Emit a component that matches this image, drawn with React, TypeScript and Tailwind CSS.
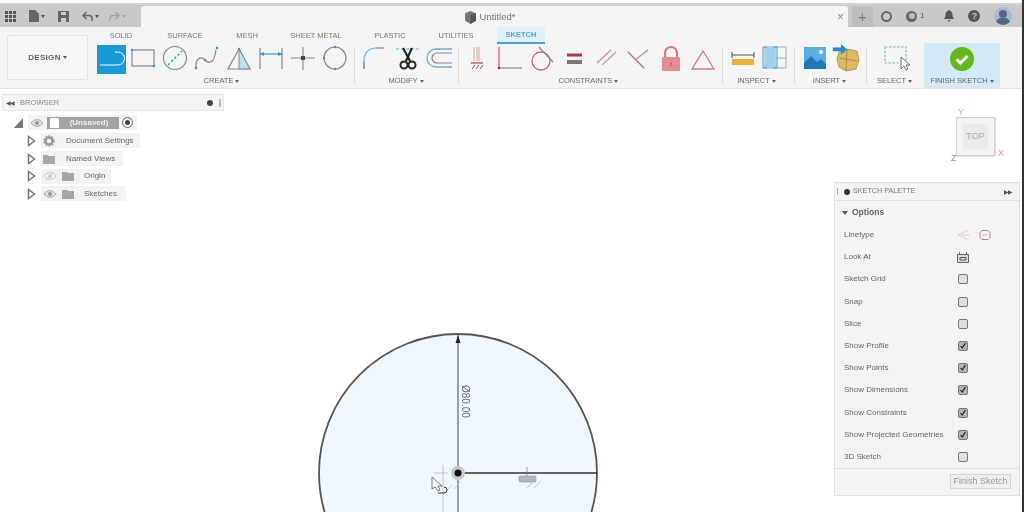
import type { ReactNode } from 'react'

const tabs = [
  { name: 'SOLID', w: 'w-[48px]' },
  { name: 'SURFACE', w: 'w-[80px]' },
  { name: 'MESH', w: 'w-[44px]' },
  { name: 'SHEET METAL', w: 'w-[94px]' },
  { name: 'PLASTIC', w: 'w-[54px]' },
  { name: 'UTILITIES', w: 'w-[78px]' },
]

const paletteRows = [
  { label: 'Sketch Grid', checked: false },
  { label: 'Snap', checked: false },
  { label: 'Slice', checked: false },
  { label: 'Show Profile', checked: true },
  { label: 'Show Points', checked: true },
  { label: 'Show Dimensions', checked: true },
  { label: 'Show Constraints', checked: true },
  { label: 'Show Projected Geometries', checked: true },
  { label: '3D Sketch', checked: false },
]

function Tool({ children }: { children: ReactNode }) {
  return (
    <svg viewBox="0 0 32 30" className="h-[30px] w-[32px] flex-shrink-0" fill="none">
      {children}
    </svg>
  )
}

function Caret({ color = 'border-t-[#666]' }: { color?: string }) {
  return <span className={`ml-[2px] inline-block h-0 w-0 border-x-[2.5px] border-t-[3px] border-x-transparent align-middle ${color}`} />
}

function Group({ label, w, labelPad = '', children }: { label: string; w: string; labelPad?: string; children: ReactNode }) {
  return (
    <div className={`flex flex-shrink-0 flex-col items-center ${w}`}>
      <div className="flex h-[30px] items-center justify-center">{children}</div>
      <div className={`mt-[1px] flex h-[12px] items-center whitespace-nowrap text-[7.500px] text-[#6a6a6a] ${labelPad}`}>
        {label}
        <Caret />
      </div>
    </div>
  )
}

function Sep() {
  return <div className="mt-[3px] h-[37px] w-px flex-shrink-0 bg-[#dddddd]" />
}

function Eye({ faded = false }: { faded?: boolean }) {
  return (
    <svg viewBox="0 0 14 10" className="h-[10px] w-[14px] flex-shrink-0" fill="none">
      <path d="M1 5c3-4.5 9-4.500 12 0-3 4.500-9 4.500-12 0z" stroke={faded ? '#c8c8c8' : '#aaa'} fill={faded ? '#f4f4f4' : '#ddd'} />
      <circle cx="7" cy="5" r="2" fill={faded ? '#d0d0d0' : '#999'} />
      {faded && <path d="M3 9l8-8" stroke="#c8c8c8" />}
    </svg>
  )
}

function Folder() {
  return (
    <svg viewBox="0 0 12 10" className="h-[10px] w-[12px] flex-shrink-0">
      <path d="M0 1h5l1 1h6v8H0z" fill="#a6a6a6" />
    </svg>
  )
}

function Expand() {
  return (
    <svg viewBox="0 0 9 12" className="h-[12px] w-[9px] flex-shrink-0" fill="none">
      <path d="M1.500 1.500v9L7.500 6z" stroke="#777" strokeWidth="1.500" fill="#fff" />
    </svg>
  )
}

function TreeRow({ w, icons, label, labelW }: { w: string; icons: ReactNode; label: string; labelW: string }) {
  return (
    <div className="flex h-[17.700px] items-center pl-[25px]">
      <Expand />
      <div className={`ml-[5px] flex h-[15px] items-center bg-[#f3f3f3] ${w}`}>
        {icons}
        <span className={`whitespace-nowrap text-[8px] text-[#666] ${labelW}`}>{label}</span>
      </div>
    </div>
  )
}

function PaletteCheck({ checked }: { checked: boolean }) {
  return (
    <div className={`flex h-[10px] w-[10px] items-center justify-center rounded-[2px] border border-[#777] ${checked ? 'bg-[#b4b4b4]' : 'bg-[#dedede]'}`}>
      {checked && (
        <svg viewBox="0 0 10 10" className="h-[10px] w-[10px]" fill="none">
          <path d="M2 5l2 2.500L8 1.500" stroke="#222" strokeWidth="1.500" />
        </svg>
      )}
    </div>
  )
}

function Browser() {
  return (
    <div className="absolute left-[2px] top-[5px] w-[222px]">
      <div className="flex h-[17px] items-center border border-[#e6e6e6] bg-[#f4f4f4] pl-[3px] pr-[2px]">
        <span className="text-[6px] leading-none tracking-[-1px] text-[#555]">◀◀</span>
        <span className="ml-[6px] flex-1 text-[7.600px] text-[#8a8a8a]">BROWSER</span>
        <span className="h-[6px] w-[6px] rounded-full bg-[#444]" />
        <span className="ml-[6px] h-[8px] w-[2px] border-x border-[#bbb]" />
      </div>
      <div className="mb-[1px] mt-[3px] flex h-[17px] items-center pl-[12px]">
        <svg viewBox="0 0 10 10" className="h-[10px] w-[10px] flex-shrink-0">
          <path d="M9 0v10H0z" fill="#777" />
        </svg>
        <div className="ml-[4px] flex h-[15px] w-[109px] items-center bg-[#f3f3f3] pl-[2px]">
          <Eye />
          <div className="ml-[3px] flex h-[12px] w-[72px] flex-shrink-0 items-center bg-[#a3a3a3]">
            <div className="ml-[3px] h-[10px] w-[9px] rounded-[1px] bg-[#fff]" />
            <span className="flex-1 text-center text-[8px] font-bold text-[#eee]">(Unsaved)</span>
          </div>
          <div className="ml-[3px] flex h-[11px] w-[11px] flex-shrink-0 items-center justify-center rounded-full border border-[#666]">
            <div className="h-[5px] w-[5px] rounded-full bg-[#444]" />
          </div>
        </div>
      </div>
      <TreeRow
        w="w-[99px]"
        icons={
          <svg viewBox="0 0 12 12" className="ml-[2px] h-[12px] w-[12px] flex-shrink-0" fill="none">
            <circle cx="6" cy="6" r="3.500" stroke="#999" strokeWidth="2.500" />
            <circle cx="6" cy="6" r="5" stroke="#999" strokeWidth="1.500" strokeDasharray="1.600 1.600" />
          </svg>
        }
        label="Document Settings"
        labelW="ml-[11px]"
      />
      <TreeRow
        w="w-[82px]"
        icons={<span className="ml-[2px]"><Folder /></span>}
        label="Named Views"
        labelW="ml-[11px]"
      />
      <TreeRow
        w="w-[70px]"
        icons={
          <span className="ml-[2px] flex items-center gap-[5px]">
            <Eye faded />
            <Folder />
          </span>
        }
        label="Origin"
        labelW="ml-[10px]"
      />
      <TreeRow
        w="w-[85px]"
        icons={
          <span className="ml-[2px] flex items-center gap-[5px]">
            <Eye />
            <Folder />
          </span>
        }
        label="Sketches"
        labelW="ml-[10px]"
      />
    </div>
  )
}

function ViewCube() {
  return (
    <div className="absolute left-[946px] top-[16px] h-[62px] w-[60px]">
      <div className="absolute left-[10px] top-[12px] flex h-[39px] w-[39px] items-center justify-center border border-[#d0d0d0] bg-[#f4f4f4] shadow-[1px_1px_1px_#e0e0e0]">
        <div className="flex h-[25px] w-[25px] items-center justify-center bg-[#ebebeb] text-[9px] text-[#a5a5a5]">TOP</div>
      </div>
      <span className="absolute left-[12px] top-[3px] text-[9px] leading-none text-[#8fd9a0]">Y</span>
      <span className="absolute left-[52px] top-[44px] text-[9px] leading-none text-[#ef8f8f]">X</span>
      <span className="absolute left-[5px] top-[49px] text-[9px] leading-none text-[#8f8fe6]">Z</span>
    </div>
  )
}

function Palette() {
  return (
    <div className="absolute left-[834px] top-[93px] flex h-[314px] w-[186px] flex-col border border-[#e2e2e2] bg-[#f4f4f4]">
      <div className="flex h-[18px] flex-shrink-0 items-center border-b border-[#e2e2e2] pl-[2px] pr-[7px]">
        <span className="h-[7px] w-[2px] border-l border-[#aaa]" />
        <span className="ml-[5px] h-[6px] w-[6px] rounded-full bg-[#333]" />
        <span className="ml-[3px] flex-1 text-[7.200px] text-[#777]">SKETCH PALETTE</span>
        <span className="text-[6px] leading-none tracking-[-1px] text-[#555]">▶▶</span>
      </div>
      <div className="flex h-[23px] flex-shrink-0 items-center pl-[7px] text-[8.500px] font-bold text-[#666]">
        <span className="mr-[4px] h-0 w-0 border-x-[3px] border-t-[4px] border-x-transparent border-t-[#555]" />
        Options
      </div>
      <div className="flex h-[22.200px] flex-shrink-0 items-center pl-[9px] text-[8px] text-[#666]">
        <span className="w-[112px]">Linetype</span>
        <svg viewBox="0 0 14 12" className="h-[12px] w-[13px]" fill="none">
          <path d="M13 1L2 6l11 5M6 6h8" stroke="#e0b48f" strokeDasharray="2 1" />
        </svg>
        <svg viewBox="0 0 12 12" className="ml-[10px] h-[12px] w-[12px]" fill="none">
          <path d="M3 1.500h6l2 2v5l-2 2H3l-2-2v-5z" stroke="#a88" />
          <path d="M3 6h6" stroke="#dba" />
        </svg>
      </div>
      <div className="flex h-[22.200px] flex-shrink-0 items-center pl-[9px] text-[8px] text-[#666]">
        <span className="w-[113px]">Look At</span>
        <svg viewBox="0 0 12 12" className="h-[12px] w-[12px]" fill="none">
          <path d="M.5 3.500h11v8H.5z" fill="#ddd" stroke="#666" />
          <path d="M2.500 1v3M9.500 1v3" stroke="#666" />
          <path d="M3 6.500h6v2.500H3z" stroke="#555" />
        </svg>
      </div>
      {paletteRows.map((r) => (
        <div key={r.label} className="flex h-[22.200px] flex-shrink-0 items-center pl-[9px] text-[8px] text-[#666]">
          <span className="w-[114px] whitespace-nowrap">{r.label}</span>
          <PaletteCheck checked={r.checked} />
        </div>
      ))}
      <div className="flex flex-1 items-center justify-end border-t border-[#e2e2e2] pb-[1px] pr-[8px]">
        <div className="flex h-[15px] w-[61px] items-center justify-center border border-[#d5d5d5] bg-[#efefef] text-[9px] text-[#999]">
          Finish Sketch
        </div>
      </div>
    </div>
  )
}

function SketchDrawing() {
  return (
    <svg viewBox="0 0 300 187" className="absolute left-[310px] top-[236px] h-[187px] w-[300px]" fill="none">
      <circle cx="148" cy="148" r="139" fill="#f0f7fd" stroke="#555" strokeWidth="1.800" />
      <path d="M148 10v177" stroke="#444" strokeWidth="1" />
      <path d="M148 10l-2.500 8h5z" fill="#222" />
      <path d="M148 148h139" stroke="#333" strokeWidth="1.300" />
      <text x="0" y="0" transform="translate(152 60) rotate(90)" fontSize="10" fill="#666" fontFamily="'Liberation Sans', sans-serif">
        Ø80.00
      </text>
      <path d="M133 140v47M124 148h14" stroke="#bbb" strokeWidth="0.800" />
      <circle cx="148" cy="148" r="7" fill="#c8c8c8" />
      <circle cx="148" cy="148" r="3.500" fill="#111" />
      <path d="M142 160l-5 5M150 157l-6 7" stroke="#b5d3e5" />
      <path d="M122 152v12l3-2 3 4 2-1-2-4h4z" fill="#fff" stroke="#555" strokeWidth="0.800" />
      <path d="M134 162a3 3 0 0 1 0 6h-6" stroke="#333" />
      <path d="M217 142v11" stroke="#777" strokeWidth="0.700" />
      <rect x="209" y="151" width="17" height="6" rx="1" fill="#b5b5b5" stroke="#999" strokeWidth="0.600" />
      <path d="M217 163l7-7M224 163l7-7" stroke="#a5cde0" />
    </svg>
  )
}

export default function App() {
  return (
    <div className="flex h-[512px] w-[1024px] flex-col overflow-hidden border-r-2 border-[#333] bg-white pt-[3px] blur-[0.5px]" style={{ fontFamily: "'Liberation Sans', Arial, sans-serif" }}>
      {/* title bar */}
      <div className="flex h-[24px] flex-shrink-0 items-end border-t-2 border-[#d4d4d4] bg-[#c9c9c9]">
        <div className="flex h-full w-[141px] flex-shrink-0 items-center pl-[5px]">
          <svg viewBox="0 0 11 11" className="h-[11px] w-[11px]" fill="#555">
            {[0, 4, 8].map((y) => [0, 4, 8].map((x) => <rect key={`${x}-${y}`} x={x} y={y} width="3" height="3" />))}
          </svg>
          <svg viewBox="0 0 10 12" className="ml-[13px] h-[12px] w-[10px]" fill="#666">
            <path d="M0 0h6l4 4v8H0z" />
          </svg>
          <Caret color="border-t-[#555]" />
          <svg viewBox="0 0 11 11" className="ml-[13px] h-[11px] w-[11px]" fill="#666">
            <path d="M0 0h11v11H0z" />
            <path d="M3 1h5v3H3zM3 7h5v4H3z" fill="#ccc" />
          </svg>
          <svg viewBox="0 0 11 10" className="ml-[13px] h-[10px] w-[11px]" fill="none" stroke="#666" strokeWidth="1.500">
            <path d="M4.500 1L1 4.500 4.500 8M1 4.500h6a3 3 0 0 1 3 3V10" />
          </svg>
          <Caret color="border-t-[#555]" />
          <svg viewBox="0 0 11 10" className="ml-[10px] h-[10px] w-[11px]" fill="none" stroke="#a3a3a3" strokeWidth="1.500">
            <path d="M6.500 1L10 4.500 6.500 8M10 4.500H4a3 3 0 0 0-3 3V10" />
          </svg>
          <Caret color="border-t-[#a3a3a3]" />
        </div>
        <div className="relative flex h-[21px] w-[707px] flex-shrink-0 items-center justify-center rounded-t-[3px] bg-[#f5f5f5] pr-[10px] pt-[1px]">
          <svg viewBox="0 0 12 12" className="h-[13px] w-[13px]">
            <path d="M1 2l5-2 5 2v7l-5 3-5-3z" fill="#777" />
            <path d="M6 3.500l5-1.500v7l-5 3z" fill="#555" />
          </svg>
          <span className="ml-[3px] text-[9.500px] text-[#777]">Untitled*</span>
          <span className="absolute right-[4px] text-[12px] leading-none text-[#888]">×</span>
        </div>
        <div className="flex h-full flex-1 items-center pl-[3px]">
          <div className="ml-[1px] flex h-[21px] w-[21px] items-center justify-center bg-[#bdbdbd] text-[15px] leading-none text-[#777]">+</div>
          <div className="ml-[8px] h-[11px] w-[11px] rounded-full border-[2.500px] border-[#666]" />
          <div className="ml-[14px] flex h-[11px] w-[11px] items-center justify-center rounded-full bg-[#666]">
            <div className="h-[6px] w-[6px] rounded-full bg-[#bbb]" />
          </div>
          <span className="ml-[3px] text-[8px] text-[#555]">1</span>
          <svg viewBox="0 0 12 12" className="ml-[19px] h-[12px] w-[12px]" fill="#555">
            <path d="M6 0a1 1 0 0 1 1 1c2 .5 2.500 2 2.500 4 0 2 1 3 1.500 4H1c.5-1 1.500-2 1.500-4 0-2 .5-3.500 2.500-4a1 1 0 0 1 1-1zM4.500 10h3L6 12z" />
          </svg>
          <div className="ml-[13px] flex h-[12px] w-[12px] items-center justify-center rounded-full bg-[#555] text-[9px] font-bold leading-none text-[#ccc]">?</div>
          <div className="relative ml-[14px] h-[18px] w-[18px] overflow-hidden rounded-full bg-[#a9b8cf]">
            <div className="absolute left-[5px] top-[3px] h-[8px] w-[8px] rounded-full bg-[#54678a]" />
            <div className="absolute left-[2px] top-[11px] h-[10px] w-[14px] rounded-full bg-[#54678a]" />
          </div>
        </div>
      </div>

      {/* toolbar */}
      <div className="flex h-[62px] flex-shrink-0 border-b border-[#e4e4e4] bg-[#f5f5f5]">
        <div className="w-[97px] flex-shrink-0 pl-[7px] pt-[8px]">
          <div className="flex h-[45px] w-[81px] items-center justify-center rounded-[2px] border border-[#e4e4e4] bg-[#f7f7f7] text-[8px] font-bold tracking-[0.3px] text-[#666]">
            DESIGN
            <Caret color="border-t-[#555]" />
          </div>
        </div>
        <div className="flex min-w-0 flex-1 flex-col">
          <div className="flex h-[17px] flex-shrink-0 items-stretch text-[7.500px] text-[#777]">
            {tabs.map((t) => (
              <div key={t.name} className={`flex items-center justify-center ${t.w}`}>
                {t.name}
              </div>
            ))}
            <div className="ml-[2px] flex w-[48px] items-center justify-center border-b-2 border-[#3ea6de] bg-[#e1f0f9] font-bold text-[#45ade2]">
              SKETCH
            </div>
          </div>
          <div className="flex h-[44px]">
            <Group label="CREATE" w="w-[254px]" labelPad="pr-[5px]">
              <div className="flex h-[29px] w-[30px] flex-shrink-0 items-center">
                <svg viewBox="0 0 29 29" className="h-[29px] w-[29px]" fill="none">
                  <rect width="29" height="29" fill="#1899dc" />
                  <path d="M3 20h18a6.500 6.500 0 0 0 0-13h-3" stroke="#fff" strokeWidth="1" />
                </svg>
              </div>
              <Tool>
                <rect x="5" y="6" width="22" height="16" stroke="#888" strokeWidth="1.200" />
                <g fill="#2e9ad6"><circle cx="5" cy="6" r="1.200" /><circle cx="27" cy="22" r="1.200" /></g>
              </Tool>
              <Tool>
                <circle cx="16" cy="14" r="11.500" stroke="#888" strokeWidth="1.200" />
                <path d="M9 21L23 7" stroke="#2e9ad6" strokeWidth="1.400" strokeDasharray="2.500 2" />
              </Tool>
              <Tool>
                <path d="M5 24c-1-10 5-12 9-8s9 4 11-10" stroke="#888" strokeWidth="1.200" />
                <g fill="#2e9ad6"><circle cx="5" cy="24" r="1.300" /><circle cx="14" cy="16" r="1.300" /><circle cx="26" cy="4" r="1.300" /></g>
              </Tool>
              <Tool>
                <path d="M16 5L5 25h22z" stroke="#888" strokeWidth="1.200" />
                <path d="M16 5l11 20H16z" fill="#bcdff3" stroke="#888" strokeWidth="1" />
                <circle cx="16" cy="5" r="1.200" fill="#2e9ad6" />
              </Tool>
              <Tool>
                <path d="M5 4v21M27 4v21" stroke="#888" strokeWidth="1.200" />
                <path d="M5 10h22" stroke="#2e9ad6" strokeWidth="1.200" />
                <path d="M5 10l4-2v4zM27 10l-4-2v4z" fill="#2e9ad6" />
              </Tool>
              <Tool>
                <path d="M16 3v23M4 14h24" stroke="#888" strokeWidth="1.100" />
                <rect x="14" y="12" width="4" height="4" fill="#444" />
              </Tool>
              <Tool>
                <circle cx="16" cy="14" r="11" stroke="#888" strokeWidth="1.200" />
                <g fill="#2e9ad6"><circle cx="16" cy="3" r="1.200" /><circle cx="16" cy="25" r="1.200" /><circle cx="5" cy="14" r="1.200" /></g>
              </Tool>
            </Group>
            <div className="w-[3px] flex-shrink-0" />
            <Sep />
            <Group label="MODIFY" w="w-[103px]" labelPad="pr-[1px]">
              <div className="ml-[2px] flex">
                <Tool>
                  <path d="M5 25V16C5 9 10 4 17 4" stroke="#6ab0dc" strokeWidth="1.200" />
                  <path d="M17 4h8" stroke="#888" strokeWidth="1.200" />
                  <path d="M5 25v-7" stroke="#888" strokeWidth="1.200" />
                </Tool>
                <div className="w-[1px]" />
                <Tool>
                  <path d="M4 5h24" stroke="#6ab0dc" strokeWidth="1" strokeDasharray="3 2" />
                  <path d="M11 4l7 13M20 4l-6 13" stroke="#222" strokeWidth="2.200" />
                  <circle cx="12" cy="21" r="3.500" stroke="#222" strokeWidth="2" />
                  <circle cx="20" cy="21" r="3.500" stroke="#222" strokeWidth="2" />
                </Tool>
                <Tool>
                  <path d="M28 5H12a9 9 0 0 0 0 18h16" stroke="#6ab0dc" strokeWidth="1.300" />
                  <path d="M28 9H13a5 5 0 0 0 0 10h15" stroke="#888" strokeWidth="1.200" />
                </Tool>
              </div>
            </Group>
            <Sep />
            <Group label="CONSTRAINTS" w="w-[263px]" labelPad="pr-[4px]">
              <Tool>
                <path d="M11 3v14M14 3v14M16 3v14" stroke="#c98888" strokeWidth="0.800" />
                <path d="M8 19h12" stroke="#b5474f" strokeWidth="1.300" />
                <path d="M9 25l3-4M13 25l3-4M17 25l3-4" stroke="#b5474f" />
              </Tool>
              <Tool>
                <path d="M4 3v22" stroke="#c06a70" strokeWidth="1.300" />
                <path d="M4 24h23" stroke="#888" strokeWidth="1.200" />
                <circle cx="4" cy="24" r="1.300" fill="#b5272f" />
              </Tool>
              <Tool>
                <circle cx="14" cy="17" r="9" stroke="#c06a70" strokeWidth="1.300" />
                <path d="M12 3l14 15" stroke="#888" strokeWidth="1.200" />
              </Tool>
              <Tool>
                <rect x="8" y="9.500" width="15" height="3" fill="#b5373f" />
                <rect x="8" y="16" width="15" height="4" fill="#777" />
              </Tool>
              <Tool>
                <path d="M6 19L20 6" stroke="#d08d92" strokeWidth="1.200" />
                <path d="M11 21L25 8" stroke="#aaa" strokeWidth="1.200" />
              </Tool>
              <Tool>
                <path d="M5 8l16 16" stroke="#c06a70" strokeWidth="1.200" />
                <path d="M12 16L25 6" stroke="#999" strokeWidth="1.200" />
              </Tool>
              <Tool>
                <path d="M10 13V9a6 6 0 0 1 12 0v4" stroke="#cf7b80" strokeWidth="2.200" />
                <rect x="7" y="13" width="18" height="14" rx="1" fill="#e28d92" />
                <rect x="15.500" y="18" width="1" height="4" fill="#a55" />
              </Tool>
              <Tool>
                <path d="M16 7l11 18H5z" stroke="#d0808a" strokeWidth="1.400" />
              </Tool>
            </Group>
            <Sep />
            <Group label="INSPECT" w="w-[71px]" labelPad="pr-[4px]">
              <Tool>
                <path d="M5 11h22M5 8v6M27 8v6" stroke="#555" strokeWidth="1" />
                <rect x="5" y="15" width="22" height="6" fill="#efb22f" />
              </Tool>
              <Tool>
                <path d="M6 3h21v21H6z" stroke="#aaa" />
                <path d="M16 3v21M6 14h21" stroke="#aaa" />
                <rect x="6" y="3" width="10" height="21" fill="#9fd0ee" />
                <path d="M8 3H4v21h4M14 3h4v21h-4" stroke="#3a9edb" />
              </Tool>
            </Group>
            <Sep />
            <Group label="INSERT" w="w-[71px]" labelPad="pr-[2px]">
              <Tool>
                <rect x="5" y="3" width="22" height="22" fill="#5aaee2" />
                <path d="M5 25v-6l7-7 6 6 4-3 5 5v5z" fill="#1f79b9" />
                <circle cx="22" cy="8" r="2" fill="#fff" />
              </Tool>
              <Tool>
                <path d="M8 8l8-3 10 2 2 9-3 9-10 2-7-4-2-8z" fill="#dcb964" stroke="#a3842f" strokeWidth="0.700" />
                <path d="M8 14l18 3M16 5l-1 22" stroke="#a3842f" strokeWidth="0.800" />
                <path d="M2 4h9V0l7 6-7 6V8H2z" transform="scale(0.9)" fill="#1f8fd8" />
              </Tool>
            </Group>
            <Sep />
            <Group label="SELECT" w="w-[57px]" labelPad="pr-[2px]">
              <Tool>
                <rect x="5" y="3" width="21" height="16" stroke="#7fc79a" strokeWidth="1.200" strokeDasharray="2.500 1.500" />
                <path d="M21 13v12l3-3 2 4 2-1-2-4h4z" fill="#fff" stroke="#666" strokeWidth="0.900" />
              </Tool>
            </Group>
            <div className="mt-[-1px] flex h-[45px] w-[76px] flex-shrink-0 flex-col items-center bg-[#d3e9f7]">
              <div className="flex h-[31px] items-center justify-center">
                <svg viewBox="0 0 24 24" className="h-[24px] w-[24px]" fill="none">
                  <circle cx="12" cy="12" r="12" fill="#5fb91a" />
                  <path d="M6.500 12.500l4 3.500 7-7" stroke="#fff" strokeWidth="3" />
                </svg>
              </div>
              <div className="mt-[1px] flex h-[12px] items-center whitespace-nowrap text-[7.500px] text-[#666]">
                FINISH SKETCH
                <Caret />
              </div>
            </div>
          </div>
        </div>
      </div>

      {/* canvas */}
      <div className="relative min-h-0 flex-1 bg-white">
        <Browser />
        <ViewCube />
        <SketchDrawing />
        <Palette />
      </div>
    </div>
  )
}
